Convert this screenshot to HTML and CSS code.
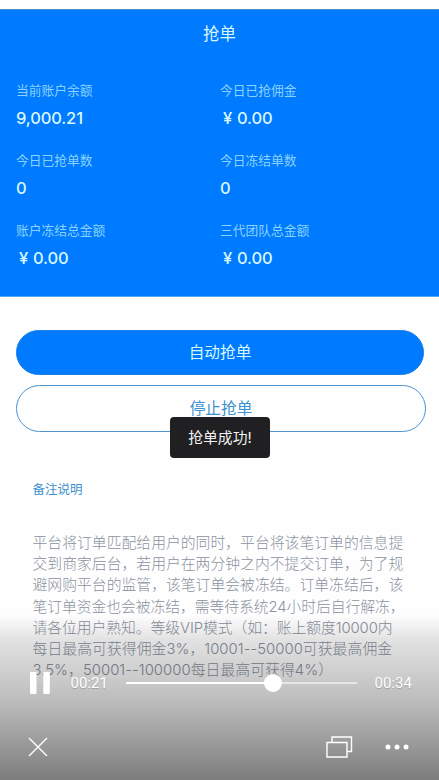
FILE: index.html
```html
<!DOCTYPE html>
<html lang="zh-CN">
<head>
<meta charset="utf-8">
<title>抢单</title>
<link rel="stylesheet" href="styles.css">
</head>
<body>
<main class="screen">
  <header class="summary">
    <h1 class="title">抢单</h1>
    <dl class="stats">
      <div><dt>当前账户余额</dt><dd>9,000.21</dd></div>
      <div><dt>今日已抢佣金</dt><dd><span class="yen">¥</span>0.00</dd></div>
      <div><dt>今日已抢单数</dt><dd>0</dd></div>
      <div><dt>今日冻结单数</dt><dd>0</dd></div>
      <div><dt>账户冻结总金额</dt><dd><span class="yen">¥</span>0.00</dd></div>
      <div><dt>三代团队总金额</dt><dd><span class="yen">¥</span>0.00</dd></div>
    </dl>
  </header>
  <section class="actions">
    <button class="btn primary">自动抢单</button>
    <button class="btn outline">停止抢单</button>
  </section>
  <section class="notes">
    <h2>备注说明</h2>
    <p>
      <span class="line">平台将订单匹配给用户的同时，平台将该笔订单的信息提</span>
      <span class="line">交到商家后台，若用户在两分钟之内不提交订单，为了规</span>
      <span class="line">避网购平台的监管，该笔订单会被冻结。订单冻结后，该</span>
      <span class="line tight">笔订单资金也会被冻结，需等待系统24小时后自行解冻，</span>
      <span class="line tight">请各位用户熟知。等级VIP模式（如：账上额度10000内</span>
      <span class="line loose">每日最高可获得佣金3%，10001--50000可获最高佣金</span>
      <span class="line loose">3.5%，50001--100000每日最高可获得4%）</span>
    </p>
  </section>
  <div class="toast">抢单成功!</div>
  <div class="player">
    <div class="timeline">
      <svg class="pause" width="20" height="22" viewBox="0 0 20 22"><rect x="0" y="0" width="6.5" height="22" rx="1"/><rect x="13.3" y="0" width="6.5" height="22" rx="1"/></svg>
      <span class="time">00:21</span>
      <div class="track"><div class="played"></div><div class="knob"></div></div>
      <span class="time">00:34</span>
    </div>
    <div class="tools">
      <svg width="20" height="20" viewBox="0 0 20 20"><path d="M1 1 19 19M19 1 1 19"/></svg>
      <svg class="windows" width="27" height="22" viewBox="0 0 27 22"><path d="M1 6.5H21V21H1ZM6 6.5V1H25.5V15.5H21"/></svg>
      <svg class="more" width="24" height="6" viewBox="0 0 24 6"><circle cx="3" cy="3" r="2.5"/><circle cx="12" cy="3" r="2.5"/><circle cx="21" cy="3" r="2.5"/></svg>
    </div>
  </div>
</main>
</body>
</html>
```
FILE: styles.css
```css
* { box-sizing: border-box; }
body { margin: 0; background: #fefefe; font-family: Inter, "Noto Sans CJK SC", sans-serif; }
h1, h2, dl, dd, p { margin: 0; font-weight: 400; }
.screen { position: relative; height: 780px; overflow: hidden; padding-top: 9px; }
.summary { height: 288px; background: #007aff; border-top: 1px solid #4590c0; border-bottom: 1px solid #55a6ee; color: #d8f8ff; }
.title { font-size: 16.5px; line-height: 24px; padding-top: 12px; text-align: center; }
.stats { display: grid; grid-template-columns: 204px 1fr; grid-auto-rows: 70.2px; padding: 35px 0 0 16px; }
.stats dt { font-size: 12.75px; line-height: 20px; color: #8ad3ff; }
.stats dd { font-size: 16.5px; line-height: 22px; margin-top: 6px; font-weight: 500; letter-spacing: -.15px; }
.yen { display: inline-block; width: 17px; padding-left: 3px; }
.actions { display: flex; flex-direction: column; gap: 10px; padding: 33px 13px 0 16px; }
.btn { display: block; padding: 0; font-family: inherit; font-size: 15.7px; line-height: 24px; border-radius: 24px; }
.primary { height: 45px; width: 408px; border: 1px solid #1680e8; background: #007aff; color: #d8f8ff; }
.outline { height: 47px; width: 410px; border: 1px solid #4d94d1; background: #fefefe; color: #3d91d0; }
.notes { padding: 48px 0 0 32.5px; }
.notes h2 { font-size: 12.5px; line-height: 20px; color: #3d91d0; }
.notes p { margin-top: 33px; color: #8b929e; font-weight: 300; font-size: 14.83px; line-height: 21.2px; }
.line { display: block; white-space: nowrap; }
.tight { letter-spacing: -.08px; }
.loose { letter-spacing: .05px; }
.toast { position: absolute; left: 170px; top: 417px; width: 100px; height: 41px; border-radius: 4px; background: #202023; color: #f2f2f2; font-size: 14.8px; line-height: 42px; text-align: center; }
.player { position: absolute; inset: 600px 0 0; padding: 72px 27px 0 30px; background: linear-gradient(rgba(0,0,0,0) 8%, rgba(0,0,0,.11) 22%, rgba(0,0,0,.26) 56%, rgba(0,0,0,.51)); color: #fff; }
.timeline { display: flex; align-items: center; height: 22px; }
.pause, .more { fill: #fff; }
.time { width: 37px; font: 15px/22px Roboto, sans-serif; text-shadow: 0 1px 1px rgba(0,0,0,.2); }
.pause + .time { margin-left: 20.5px; }
.track { position: relative; width: 231px; height: 2px; margin: 0 18px; background: rgba(255,255,255,.55); }
.played { width: 147px; height: 2px; background: #fff; }
.knob { position: absolute; left: 138px; top: -8px; width: 18px; height: 18px; border-radius: 50%; background: #fff; }
.tools { display: flex; align-items: center; margin: 41px 3px 0 -2px; height: 24px; }
.tools svg { stroke: #fff; stroke-width: 1.4; fill: none; flex: none; }
.tools .windows { margin-left: auto; margin-right: 32px; }
.tools .more { fill: #fff; stroke: none; }
```
